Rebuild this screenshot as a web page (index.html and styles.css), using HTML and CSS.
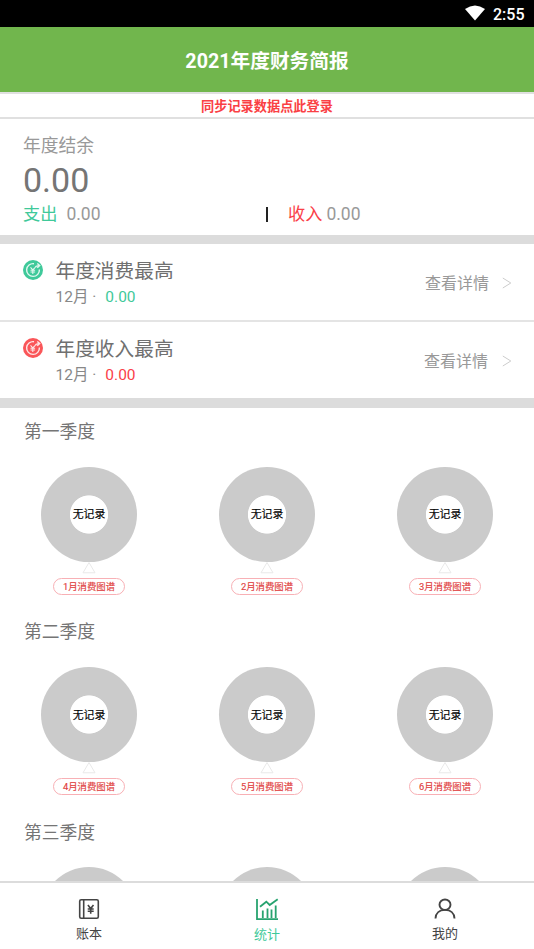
FILE: index.html
```html
<!DOCTYPE html>
<html lang="zh-CN">
<head>
<meta charset="utf-8">
<title>2021年度财务简报</title>
<link rel="stylesheet" href="styles.css">
</head>
<body>
<svg class="defs" width="0" height="0">
  <symbol id="coin" viewBox="0 0 20 20">
    <circle cx="10" cy="10" r="10" fill="currentColor"/>
    <g fill="none" stroke="#fff" stroke-opacity=".85" stroke-width="1.4">
      <path d="M11 3.700A6.400 6.400 0 1 0 16.400 9.500"/>
      <path d="M12.300 7.600Q12.700 5.600 16 5.600M14.300 3.400l2.400 2.200-2.400 2.200"/>
      <path d="M7.500 7.400l2.300 2.500 2.200-2.300M9.800 9.900v4.200M7.500 10.200h4.600M7.500 12h4.600" stroke-width="1.1"/>
    </g>
  </symbol>
  <symbol id="chevron" viewBox="0 0 10 12"><path d="M.8 1l8 5-8 5" fill="none" stroke="#ccc"/></symbol>
  <symbol id="pointer" viewBox="0 0 14 12"><path d="M7 .5L13 10.800H1z" fill="none" stroke="#e9e9e9"/></symbol>
</svg>
<div class="app">
  <div class="status">
    <svg width="20" height="16" viewBox="0 0 20 16"><path d="M0 4Q10-3.2 20 4L10 15.5z" fill="#fff"/></svg>
    <span>2:55</span>
  </div>
  <header class="header">2021年度财务简报</header>
  <div class="login">同步记录数据点此登录</div>
  <section class="summary">
    <div class="summary-label">年度结余</div>
    <div class="balance">0.00</div>
    <div class="totals">
      <div class="spend"><span class="green">支出</span><span>0.00</span></div>
      <i class="divider"></i>
      <div class="income"><span class="red">收入</span><span>0.00</span></div>
    </div>
  </section>
  <section class="records">
    <div class="record">
      <svg class="coin green" width="20" height="20"><use href="#coin"/></svg>
      <div class="record-main">
        <div class="record-title">年度消费最高</div>
        <div class="record-sub">12月 ·<span class="green">0.00</span></div>
      </div>
      <div class="more">查看详情</div>
      <svg class="chevron" width="10" height="12"><use href="#chevron"/></svg>
    </div>
    <div class="record">
      <svg class="coin coral" width="20" height="20"><use href="#coin"/></svg>
      <div class="record-main">
        <div class="record-title">年度收入最高</div>
        <div class="record-sub">12月 ·<span class="red">0.00</span></div>
      </div>
      <div class="more more-income">查看详情</div>
      <svg class="chevron" width="10" height="12"><use href="#chevron"/></svg>
    </div>
  </section>
  <main class="quarters">
    <section class="quarter">
      <h2>第一季度</h2>
      <div class="months">
        <div class="month"><div class="donut"><span>无记录</span></div><svg width="14" height="12"><use href="#pointer"/></svg><div class="pill">1月消费图谱</div></div>
        <div class="month"><div class="donut"><span>无记录</span></div><svg width="14" height="12"><use href="#pointer"/></svg><div class="pill">2月消费图谱</div></div>
        <div class="month"><div class="donut"><span>无记录</span></div><svg width="14" height="12"><use href="#pointer"/></svg><div class="pill">3月消费图谱</div></div>
      </div>
    </section>
    <section class="quarter">
      <h2>第二季度</h2>
      <div class="months">
        <div class="month"><div class="donut"><span>无记录</span></div><svg width="14" height="12"><use href="#pointer"/></svg><div class="pill">4月消费图谱</div></div>
        <div class="month"><div class="donut"><span>无记录</span></div><svg width="14" height="12"><use href="#pointer"/></svg><div class="pill">5月消费图谱</div></div>
        <div class="month"><div class="donut"><span>无记录</span></div><svg width="14" height="12"><use href="#pointer"/></svg><div class="pill">6月消费图谱</div></div>
      </div>
    </section>
    <section class="quarter">
      <h2>第三季度</h2>
      <div class="months">
        <div class="month"><div class="donut"></div></div>
        <div class="month"><div class="donut"></div></div>
        <div class="month"><div class="donut"></div></div>
      </div>
    </section>
  </main>
  <nav class="tabs">
    <div class="tab">
      <svg width="24" height="24" viewBox="0 0 24 24" fill="none" stroke="#444" stroke-width="1.6"><rect x="2.7" y="2.7" width="18.6" height="18.6" rx="1.5"/><path d="M6.7 2.7v18.6"/><path d="M10.900 8l2.800 3.600L16.500 8M13.700 11.600v5.200M10.700 12h6M10.700 14.300h6"/></svg>
      <span>账本</span>
    </div>
    <div class="tab active">
      <svg width="24" height="24" viewBox="0 0 24 24" fill="none" stroke="#27a36f" stroke-width="1.800"><path d="M2 1v20.200h21M5 8.700l6.300-5L14.700 7l8-5.800M7.800 20v-7.500M12.500 20V10.500M16.500 20v-8.500M20.700 20V7.500"/></svg>
      <span>统计</span>
    </div>
    <div class="tab">
      <svg width="24" height="24" viewBox="0 0 24 24" fill="none" stroke="#444" stroke-width="1.900"><ellipse cx="12" cy="7.700" rx="5.500" ry="5.200"/><path d="M2.500 21.500C2.700 16 6.500 12.900 12 12.900s9.300 3.100 9.500 8.600"/></svg>
      <span>我的</span>
    </div>
  </nav>
</div>
</body>
</html>
```
FILE: styles.css
```css
* { box-sizing: border-box; }
body { margin: 0; font-family: Roboto, "Noto Sans CJK SC", sans-serif; background: #fff; }
svg { display: block; flex: none; }
.defs { position: absolute; }
.app { height: 949px; display: flex; flex-direction: column; overflow: hidden; }
.green { color: #3fc99a; }
.red { color: #fa4048; }
.coral { color: #fa5659; }

.status { height: 27px; flex: none; background: #000; color: #fff; display: flex; justify-content: flex-end; align-items: center; gap: 8px; padding: 1px 9.500px 0 0; font-size: 16px; font-weight: 500; }
.status svg { margin-top: -2px; }
.header { height: 65px; flex: none; background: #71b64d; color: #fff; font-size: 19.700px; font-weight: 700; line-height: 69px; text-align: center; }
.login { height: 27px; flex: none; border: solid #e0e0e0; border-width: 2px 0; color: #fa4044; font-size: 13.200px; font-weight: 700; line-height: 25px; text-align: center; }

.summary { height: 125px; flex: none; padding: 13px 23px 0; border-bottom: 9px solid #dcdcdc; color: #999; }
.summary-label { font-size: 17.800px; line-height: 27px; }
.balance { font-size: 34px; line-height: 43px; color: #757575; }
.totals { display: flex; align-items: center; font-size: 17.200px; line-height: 24px; }
.spend { width: 243px; display: flex; gap: 9px; }
.spend span + span, .income span + span { font-size: 17.500px; }
.divider { width: 2px; height: 15px; background: #222; margin-top: 1px; }
.income { display: flex; gap: 4px; margin-left: 20px; }

.records { flex: none; border-bottom: 10px solid #dcdcdc; }
.record { height: 76px; display: flex; padding: 0 22px 0 23px; }
.record + .record { height: 78px; border-top: 2px solid #e4e4e4; }
.coin { margin-top: 16px; }
.record-main { flex: 1; padding: 14px 0 0 12.500px; }
.record-title { font-size: 19.700px; line-height: 28px; color: #707070; }
.record-sub { font-size: 15.500px; line-height: 23px; color: #888; }
.record-sub span { margin-left: 9px; }
.more { align-self: center; font-size: 16px; line-height: 24px; color: #999; margin-right: 13px; padding-top: 3px; }
.more-income { margin-right: 14px; }
.chevron { align-self: center; margin-top: 2px; }

.quarters { flex: 1; min-height: 0; overflow: hidden; }
.quarter { height: 200.300px; padding-top: 10px; }
h2 { margin: 0 0 0 24px; font-size: 17.800px; font-weight: 400; line-height: 28px; color: #757575; }
.months { display: grid; grid-template-columns: repeat(3, 1fr); margin-top: 20.500px; }
.month { display: flex; flex-direction: column; align-items: center; }
.donut { width: 95.500px; height: 95.500px; border-radius: 50%; background: radial-gradient(circle, #fff 18.700px, #cbcbcb 19.500px); display: flex; align-items: center; justify-content: center; font-size: 10.900px; line-height: 16px; color: #000; -webkit-text-stroke: .15px #000; }
.donut span { padding-top: 2px; }
.pill { width: 72px; height: 17px; margin-top: 3.500px; border: 1px solid #f8b0b5; border-radius: 9px; color: #df3e40; font-size: 9.400px; line-height: 15px; text-align: center; -webkit-text-stroke: .15px #df3e40; }

.tabs { height: 68px; flex: none; border-top: 2px solid #dcdcdc; background: #fff; display: grid; grid-template-columns: repeat(3, 1fr); }
.tab { display: flex; flex-direction: column; align-items: center; padding-top: 14px; font-size: 13px; line-height: 20px; color: #444; }
.tab span { margin-top: 3px; }
.active { color: #3fc99a; padding-top: 15px; }
```
